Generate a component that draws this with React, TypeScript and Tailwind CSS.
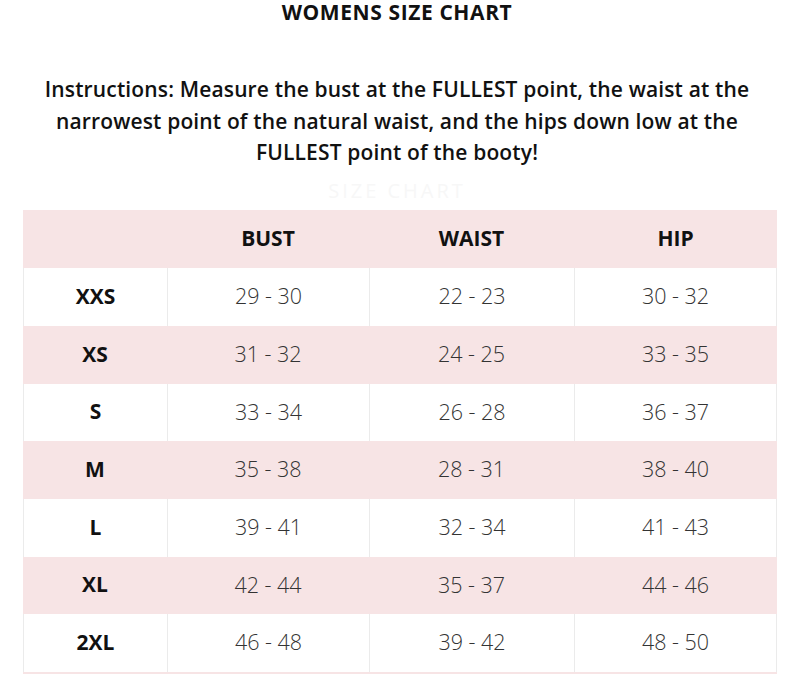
import React from "react";

const rows: { size: string; bust: string; waist: string; hip: string; pink: boolean; h: string }[] = [
  { size: "XXS", bust: "29 - 30", waist: "22 - 23", hip: "30 - 32", pink: false, h: "h-[58px]" },
  { size: "XS", bust: "31 - 32", waist: "24 - 25", hip: "33 - 35", pink: true, h: "h-[58px]" },
  { size: "S", bust: "33 - 34", waist: "26 - 28", hip: "36 - 37", pink: false, h: "h-[57px]" },
  { size: "M", bust: "35 - 38", waist: "28 - 31", hip: "38 - 40", pink: true, h: "h-[58px]" },
  { size: "L", bust: "39 - 41", waist: "32 - 34", hip: "41 - 43", pink: false, h: "h-[58px]" },
  { size: "XL", bust: "42 - 44", waist: "35 - 37", hip: "44 - 46", pink: true, h: "h-[57px]" },
  { size: "2XL", bust: "46 - 48", waist: "39 - 42", hip: "48 - 50", pink: false, h: "h-[58px]" },
];

export default function App() {
  return (
    <div
      className="w-[794px] h-[674px] bg-white overflow-hidden text-[#111]"
      style={{ fontFamily: '"Open Sans", "Noto Sans", sans-serif' }}
    >
      <div className="h-[24px] text-center text-[21px] font-bold leading-[24px] tracking-[0.6px]">
        WOMENS SIZE CHART
      </div>
      <div className="pt-[50px] text-center text-[21px] font-semibold leading-[31.5px] tracking-[0.15px]">
        <div>Instructions: Measure the bust at the FULLEST point, the waist at the</div>
        <div>narrowest point of the natural waist, and the hips down low at the</div>
        <div>FULLEST point of the booty!</div>
      </div>
      <div className="h-[41px] flex items-center justify-center text-[20px] text-[#f7f7f7] tracking-[3px] pt-[4px]">
        SIZE CHART
      </div>
      <div className="ml-[23px] w-[754px]">
        <div className="grid grid-cols-[144px_202px_205px_203px] h-[58px] bg-[#f7e4e5] text-[21px] font-bold">
          <div />
          <div className="flex items-center justify-center">BUST</div>
          <div className="flex items-center justify-center">WAIST</div>
          <div className="flex items-center justify-center">HIP</div>
        </div>
        {rows.map((r) => (
          <div
            key={r.size}
            className={`grid grid-cols-[144px_202px_205px_203px] ${r.h} ${r.pink ? "bg-[#f7e4e5]" : "bg-white"}`}
          >
            <div className={`flex items-center justify-center text-[21px] font-bold ${r.pink ? "" : "border-l border-[#ebebeb]"}`}>
              {r.size}
            </div>
            <div className={`flex items-center justify-center text-[21.5px] font-light text-[#333] ${r.pink ? "" : "border-l border-[#ebebeb]"}`}>
              {r.bust}
            </div>
            <div className={`flex items-center justify-center text-[21.5px] font-light text-[#333] ${r.pink ? "" : "border-l border-[#ebebeb]"}`}>
              {r.waist}
            </div>
            <div className={`flex items-center justify-center text-[21.5px] font-light text-[#333] ${r.pink ? "" : "border-x border-[#ebebeb]"}`}>
              {r.hip}
            </div>
          </div>
        ))}
        <div className="h-[2px] bg-[#f7e4e5]" />
      </div>
    </div>
  );
}
